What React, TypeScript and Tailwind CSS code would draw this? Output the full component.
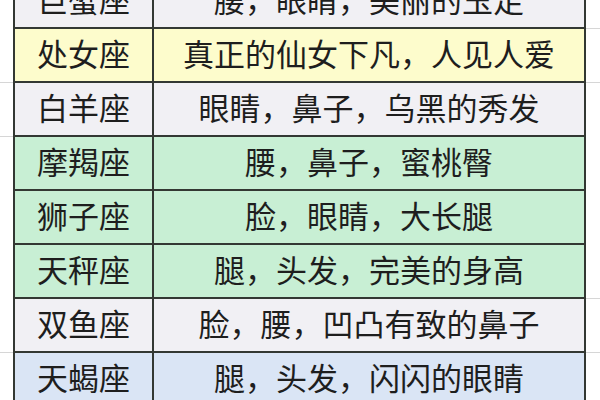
import React from 'react';

type Row = {
  sign: string;
  traits: string;
  bg: string;
  lineLeft?: boolean;
  lineRight?: boolean;
};

const rows: Row[] = [
  { sign: '巨蟹座', traits: '腰，眼睛，美丽的玉足', bg: 'bg-[#f1f0f4]', lineRight: true },
  { sign: '处女座', traits: '真正的仙女下凡，人见人爱', bg: 'bg-[#fdfccc]', lineLeft: true, lineRight: true },
  { sign: '白羊座', traits: '眼睛，鼻子，乌黑的秀发', bg: 'bg-[#f1f0f4]', lineLeft: true },
  { sign: '摩羯座', traits: '腰，鼻子，蜜桃臀', bg: 'bg-[#c8efd4]' },
  { sign: '狮子座', traits: '脸，眼睛，大长腿', bg: 'bg-[#c8efd4]' },
  { sign: '天秤座', traits: '腿，头发，完美的身高', bg: 'bg-[#c8efd4]', lineRight: true },
  { sign: '双鱼座', traits: '脸，腰，凹凸有致的鼻子', bg: 'bg-[#f1f0f4]', lineLeft: true, lineRight: true },
  { sign: '天蝎座', traits: '腿，头发，闪闪的眼睛', bg: 'bg-[#dae5f5]' },
];

export default function App() {
  return (
    <div className="w-[600px] h-[400px] overflow-hidden bg-white text-[#1e1e1e] font-['Noto_Sans_CJK_SC','Noto_Sans',sans-serif]">
      <div className="mt-[-25px] flex flex-col">
        {rows.map((row) => (
          <div key={row.sign} className="flex h-[54px]">
            {/* left margin */}
            <div
              className={`w-[13px] h-full ${row.lineLeft ? 'border-b border-[#d6d6d6]' : ''}`}
            />
            <div
              className={`w-[139px] h-full flex items-center justify-center pb-[6px] border-l-2 border-b-2 border-[#333833] text-[31px] leading-none ${row.bg}`}
            >
              {row.sign}
            </div>
            <div
              className={`w-[434px] h-full flex items-center justify-center pb-[6px] border-l-2 border-r-2 border-b-2 border-[#333833] text-[31px] leading-none ${row.bg}`}
            >
              {row.traits}
            </div>
            {/* right margin */}
            <div
              className={`flex-1 h-full ${row.lineRight ? 'border-b border-[#d6d6d6]' : ''}`}
            />
          </div>
        ))}
      </div>
    </div>
  );
}
